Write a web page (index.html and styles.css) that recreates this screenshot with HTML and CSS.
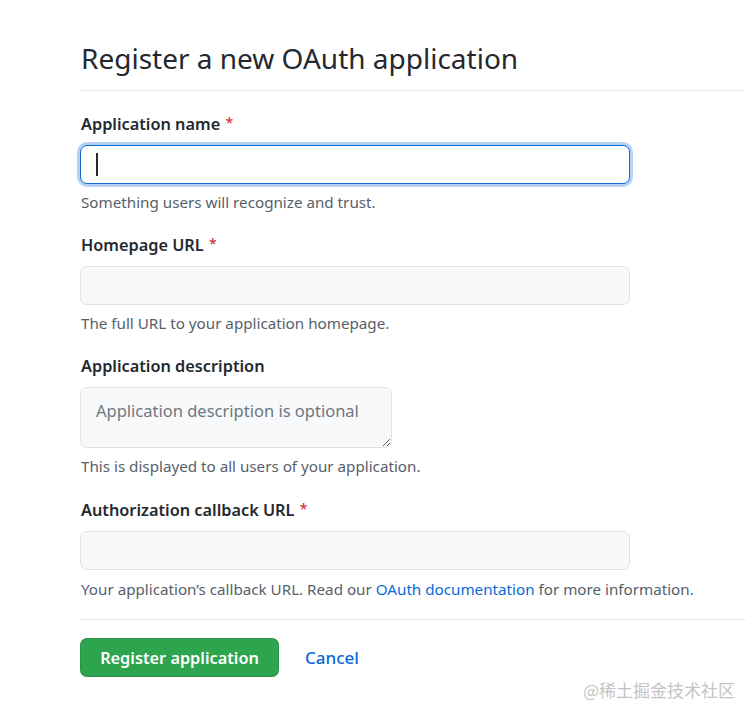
FILE: index.html
```html
<!DOCTYPE html>
<html lang="en">
<head>
<meta charset="utf-8">
<title>Register a new OAuth application</title>
<link rel="stylesheet" href="styles.css">
</head>
<body>
<main class="page">
  <h1 class="title">Register a new OAuth application</h1>
  <form class="form">
    <div class="group">
      <label class="label">Application name <span class="req">*</span></label>
      <span class="field-wrap">
        <input class="input focused" type="text">
        <span class="caret"></span>
      </span>
      <p class="note">Something users will recognize and trust.</p>
    </div>
    <div class="group">
      <label class="label">Homepage URL <span class="req">*</span></label>
      <input class="input" type="text">
      <p class="note">The full URL to your application homepage.</p>
    </div>
    <div class="group">
      <label class="label">Application description</label>
      <textarea class="textarea" placeholder="Application description is optional"></textarea>
      <p class="note">This is displayed to all users of your application.</p>
    </div>
    <div class="group group-last">
      <label class="label">Authorization callback URL <span class="req">*</span></label>
      <input class="input" type="text">
      <p class="note">Your application’s callback URL. Read our <a class="link" href="#">OAuth documentation</a> for more information.</p>
    </div>
    <div class="actions">
      <button class="btn-primary" type="button">Register application</button>
      <a class="btn-link" href="#">Cancel</a>
    </div>
  </form>
</main>
<div class="watermark">@稀土掘金技术社区</div>
</body>
</html>
```
FILE: styles.css
```css
* { box-sizing: border-box; }
html, body { margin: 0; padding: 0; background: #fff; }
body {
  font-family: "Segoe UI", "Noto Sans", "Noto Sans CJK SC", sans-serif;
  color: #24292f;
  width: 746px;
  height: 719px;
  overflow: hidden;
  position: relative;
}
.page { padding: 39px 0 0 80px; }
.title {
  margin: 0;
  font-size: 28px;
  font-weight: 400;
  line-height: 38px;
  padding: 0 0 13px 1px;
  border-bottom: 1px solid #e8eaed;
}
.form { margin-top: 22px; }
.group { display: flex; flex-direction: column; align-items: flex-start; }
.group + .group { margin-top: 22px; }
.group-last { margin-top: 23px !important; }
.label {
  display: block;
  height: 22px;
  font-size: 16.3px;
  font-weight: 600;
  line-height: 22px;
  padding-left: 1px;
  margin-bottom: 10px;
}
.req {
  color: #cf222e;
  font-weight: 400;
  font-size: 14px;
  line-height: 1;
  vertical-align: 2px;
  margin-left: 1px;
}
.field-wrap { position: relative; display: block; }
.input {
  display: block;
  width: 550px;
  height: 39px;
  padding: 0 15px;
  font: inherit;
  font-size: 16.5px;
  border: 1px solid #dfe3e7;
  border-radius: 7px;
  background: #f8f9fb;
  outline: none;
}
.input.focused {
  background: #fff;
  border-color: #0969da;
  box-shadow: 0 0 0 3px rgba(9, 105, 218, 0.3);
  caret-color: transparent;
}
.caret {
  position: absolute;
  left: 16px;
  top: 8px;
  width: 1.5px;
  height: 23px;
  background: #24292f;
}
.textarea {
  display: block;
  width: 312px;
  height: 61px;
  padding: 10px 15px;
  font: inherit;
  font-size: 16.5px;
  line-height: 25px;
  border: 1px solid #dfe3e7;
  border-radius: 7px;
  background: #f8f9fb;
  color: #24292f;
  outline: none;
}
.textarea::placeholder { color: #6e7781; }
.note {
  margin: 8px 0 0;
  font-size: 15.2px;
  line-height: 20px;
  color: #57606a;
  padding-left: 1px;
}
.group-last .note { margin-top: 9px; }
.link { color: #0969da; text-decoration: none; }
.actions {
  margin-top: 20px;
  border-top: 1px solid #e8eaed;
  padding-top: 18px;
  display: flex;
  align-items: center;
  gap: 26px;
}
.btn-primary {
  height: 39px;
  width: 199px;
  border: 1px solid rgba(27, 31, 36, 0.15);
  border-radius: 7px;
  background: #2da44e;
  color: #fff;
  font: inherit;
  font-size: 16.3px;
  font-weight: 600;
  padding: 0;
  white-space: nowrap;
}
.btn-link {
  color: #0969da;
  text-decoration: none;
  font-size: 17px;
  font-weight: 500;
}
.watermark {
  position: absolute;
  right: 11px;
  top: 679px;
  font-size: 17px;
  line-height: 22px;
  color: #c4c4c4;
  font-family: "Noto Sans CJK SC", sans-serif;
}
```
